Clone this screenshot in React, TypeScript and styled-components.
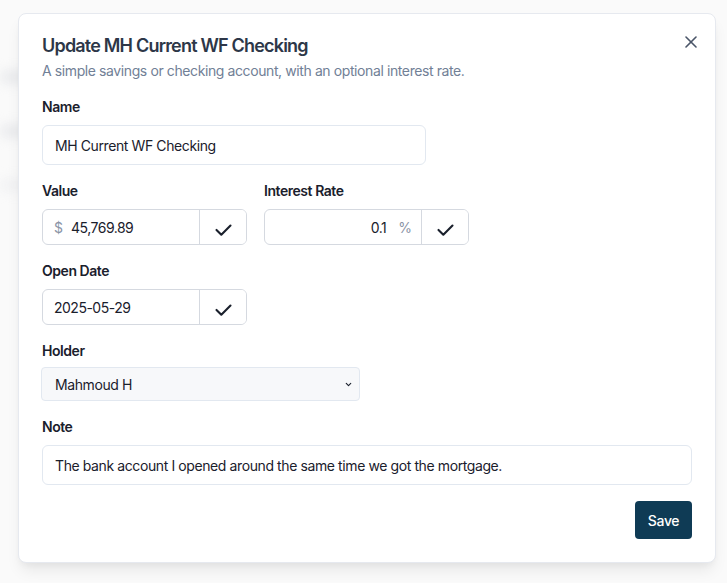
import React from 'react';
import styled, { createGlobalStyle } from 'styled-components';

const GlobalStyle = createGlobalStyle`
  html, body {
    margin: 0;
    padding: 0;
    background: #fafafa;
  }
  body {
    font-family: Inter, "Noto Sans", sans-serif;
    color: #1a202c;
  }
  * {
    box-sizing: border-box;
  }
`;

const Page = styled.div`
  position: relative;
  width: 727px;
  height: 583px;
  overflow: hidden;
  background: #fafafa;
`;

const BlurredApp = styled.div`
  display: flex;
  flex-direction: column;
  gap: 40px;
  padding: 70px 0 0 0;
  filter: blur(6px);
  opacity: 0.5;
`;

const GhostRow = styled.div<{ $width: number; $tone?: string }>`
  width: ${(p) => p.$width}px;
  height: 14px;
  border-radius: 6px;
  background: ${(p) => p.$tone || '#d9dbe0'};
`;

const Overlay = styled.div`
  position: absolute;
  inset: 0;
  padding: 13px 11px 0 18px;
  display: flex;
  align-items: flex-start;
`;

const Modal = styled.section`
  position: relative;
  width: 698px;
  height: 550px;
  background: #ffffff;
  border: 1px solid #e6e9ef;
  border-radius: 8px;
  box-shadow: 0 10px 15px -3px rgba(0, 0, 0, 0.08), 0 4px 6px -2px rgba(0, 0, 0, 0.04);
  padding: 20px 23px 23px 23px;
  display: flex;
  flex-direction: column;
`;

const CloseButton = styled.button`
  position: absolute;
  top: 16px;
  right: 12px;
  width: 24px;
  height: 24px;
  border: none;
  background: transparent;
  display: flex;
  align-items: center;
  justify-content: center;
  padding: 0;
  cursor: pointer;
`;

const Header = styled.header`
  display: flex;
  flex-direction: column;
  gap: 3px;
  margin-bottom: 16px;
`;

const Title = styled.h2`
  margin: 0;
  font-size: 18px;
  line-height: 24px;
  font-weight: 600;
  color: #2d3748;
  letter-spacing: -0.8px;
`;

const Subtitle = styled.p`
  margin: 0;
  font-size: 14px;
  line-height: 20px;
  color: #718096;
  letter-spacing: -0.4px;
`;

const Form = styled.div`
  display: flex;
  flex-direction: column;
  gap: 16px;
`;

const Field = styled.div<{ $gap?: number }>`
  display: flex;
  flex-direction: column;
  gap: ${(p) => (p.$gap ?? 8)}px;
`;

const Label = styled.label`
  font-size: 14px;
  line-height: 20px;
  font-weight: 600;
  color: #1a202c;
  letter-spacing: -0.45px;
`;

const Row = styled.div`
  display: grid;
  grid-template-columns: 205px 205px;
  gap: 17px;
`;

const TextInput = styled.div<{ $width?: number }>`
  width: ${(p) => (p.$width ? `${p.$width}px` : '100%')};
  height: 40px;
  border: 1px solid #e2e8f0;
  border-radius: 6px;
  display: flex;
  align-items: center;
  padding: 0 12px;
  font-size: 14px;
  color: #1a202c;
  letter-spacing: -0.4px;
`;

const Group = styled.div`
  width: 205px;
  height: 36px;
  border: 1px solid #d5d9e0;
  border-radius: 6px;
  display: flex;
  align-items: stretch;
  overflow: hidden;
`;

const GroupInput = styled.div<{ $align?: 'left' | 'right' }>`
  flex: 1;
  display: flex;
  align-items: center;
  justify-content: ${(p) => (p.$align === 'right' ? 'flex-end' : 'flex-start')};
  padding: ${(p) => (p.$align === 'right' ? '0 9px 0 11px' : '0 12px 0 11px')};
  font-size: 14px;
  color: #1a202c;
  letter-spacing: -0.5px;
  gap: ${(p) => (p.$align === 'right' ? 12 : 8)}px;
`;

const Addon = styled.span`
  color: #8a94a6;
  font-size: 14px;
  letter-spacing: 0;
`;

const CheckButton = styled.button`
  width: 47px;
  border: none;
  border-left: 1px solid #d5d9e0;
  background: #ffffff;
  display: flex;
  align-items: center;
  justify-content: center;
  padding: 4px 0 0 0;
  cursor: pointer;
`;

const Select = styled.div`
  width: 319px;
  height: 34px;
  margin-left: -1px;
  border: 1px solid #e2e8f0;
  border-radius: 4px;
  background: #f7f8fa;
  display: flex;
  align-items: center;
  justify-content: space-between;
  padding: 0 6px 0 13px;
  font-size: 14px;
  color: #1a202c;
  letter-spacing: -0.4px;
`;

const Footer = styled.div`
  margin-top: auto;
  display: flex;
  justify-content: flex-end;
`;

const SaveButton = styled.button`
  width: 57px;
  height: 38px;
  border: none;
  border-radius: 4px;
  background: #0f3b55;
  color: #ffffff;
  font-family: Inter, "Noto Sans", sans-serif;
  font-size: 14px;
  font-weight: 500;
  letter-spacing: -0.3px;
  cursor: pointer;
`;

const Check = () => (
  <svg width="21" height="21" viewBox="0 0 24 24" fill="none" stroke="#1a202c" strokeWidth="2.4" strokeLinecap="round" strokeLinejoin="round">
    <polyline points="4 12.5 9.5 18 20 7.5" />
  </svg>
);

const Chevron = () => (
  <svg width="9" height="9" viewBox="0 0 24 24" fill="none" stroke="#1a202c" strokeWidth="3" strokeLinecap="round" strokeLinejoin="round">
    <polyline points="6 9 12 15 18 9" />
  </svg>
);

const CloseIcon = () => (
  <svg width="12" height="12" viewBox="0 0 12 12" fill="none" stroke="#4a5568" strokeWidth="1.6" strokeLinecap="round">
    <line x1="1" y1="1" x2="11" y2="11" />
    <line x1="11" y1="1" x2="1" y2="11" />
  </svg>
);

export default function App() {
  return (
    <Page>
      <GlobalStyle />
      <BlurredApp aria-hidden>
        <GhostRow $width={40} />
        <GhostRow $width={40} />
        <GhostRow $width={30} $tone="#e8e9ec" />
      </BlurredApp>
      <Overlay>
        <Modal>
          <CloseButton aria-label="Close">
            <CloseIcon />
          </CloseButton>
          <Header>
            <Title>Update MH Current WF Checking</Title>
            <Subtitle>A simple savings or checking account, with an optional interest rate.</Subtitle>
          </Header>
          <Form>
            <Field>
              <Label>Name</Label>
              <TextInput $width={384}>MH Current WF Checking</TextInput>
            </Field>
            <Row>
              <Field>
                <Label>Value</Label>
                <Group>
                  <GroupInput>
                    <Addon>$</Addon>
                    45,769.89
                  </GroupInput>
                  <CheckButton aria-label="Confirm value">
                    <Check />
                  </CheckButton>
                </Group>
              </Field>
              <Field>
                <Label>Interest Rate</Label>
                <Group>
                  <GroupInput $align="right">
                    0.1
                    <Addon>%</Addon>
                  </GroupInput>
                  <CheckButton aria-label="Confirm interest rate">
                    <Check />
                  </CheckButton>
                </Group>
              </Field>
            </Row>
            <Field>
              <Label>Open Date</Label>
              <Group>
                <GroupInput>2025-05-29</GroupInput>
                <CheckButton aria-label="Confirm open date">
                  <Check />
                </CheckButton>
              </Group>
            </Field>
            <Field $gap={6}>
              <Label>Holder</Label>
              <Select>
                Mahmoud H
                <Chevron />
              </Select>
            </Field>
            <Field>
              <Label>Note</Label>
              <TextInput>The bank account I opened around the same time we got the mortgage.</TextInput>
            </Field>
          </Form>
          <Footer>
            <SaveButton>Save</SaveButton>
          </Footer>
        </Modal>
      </Overlay>
    </Page>
  );
}
